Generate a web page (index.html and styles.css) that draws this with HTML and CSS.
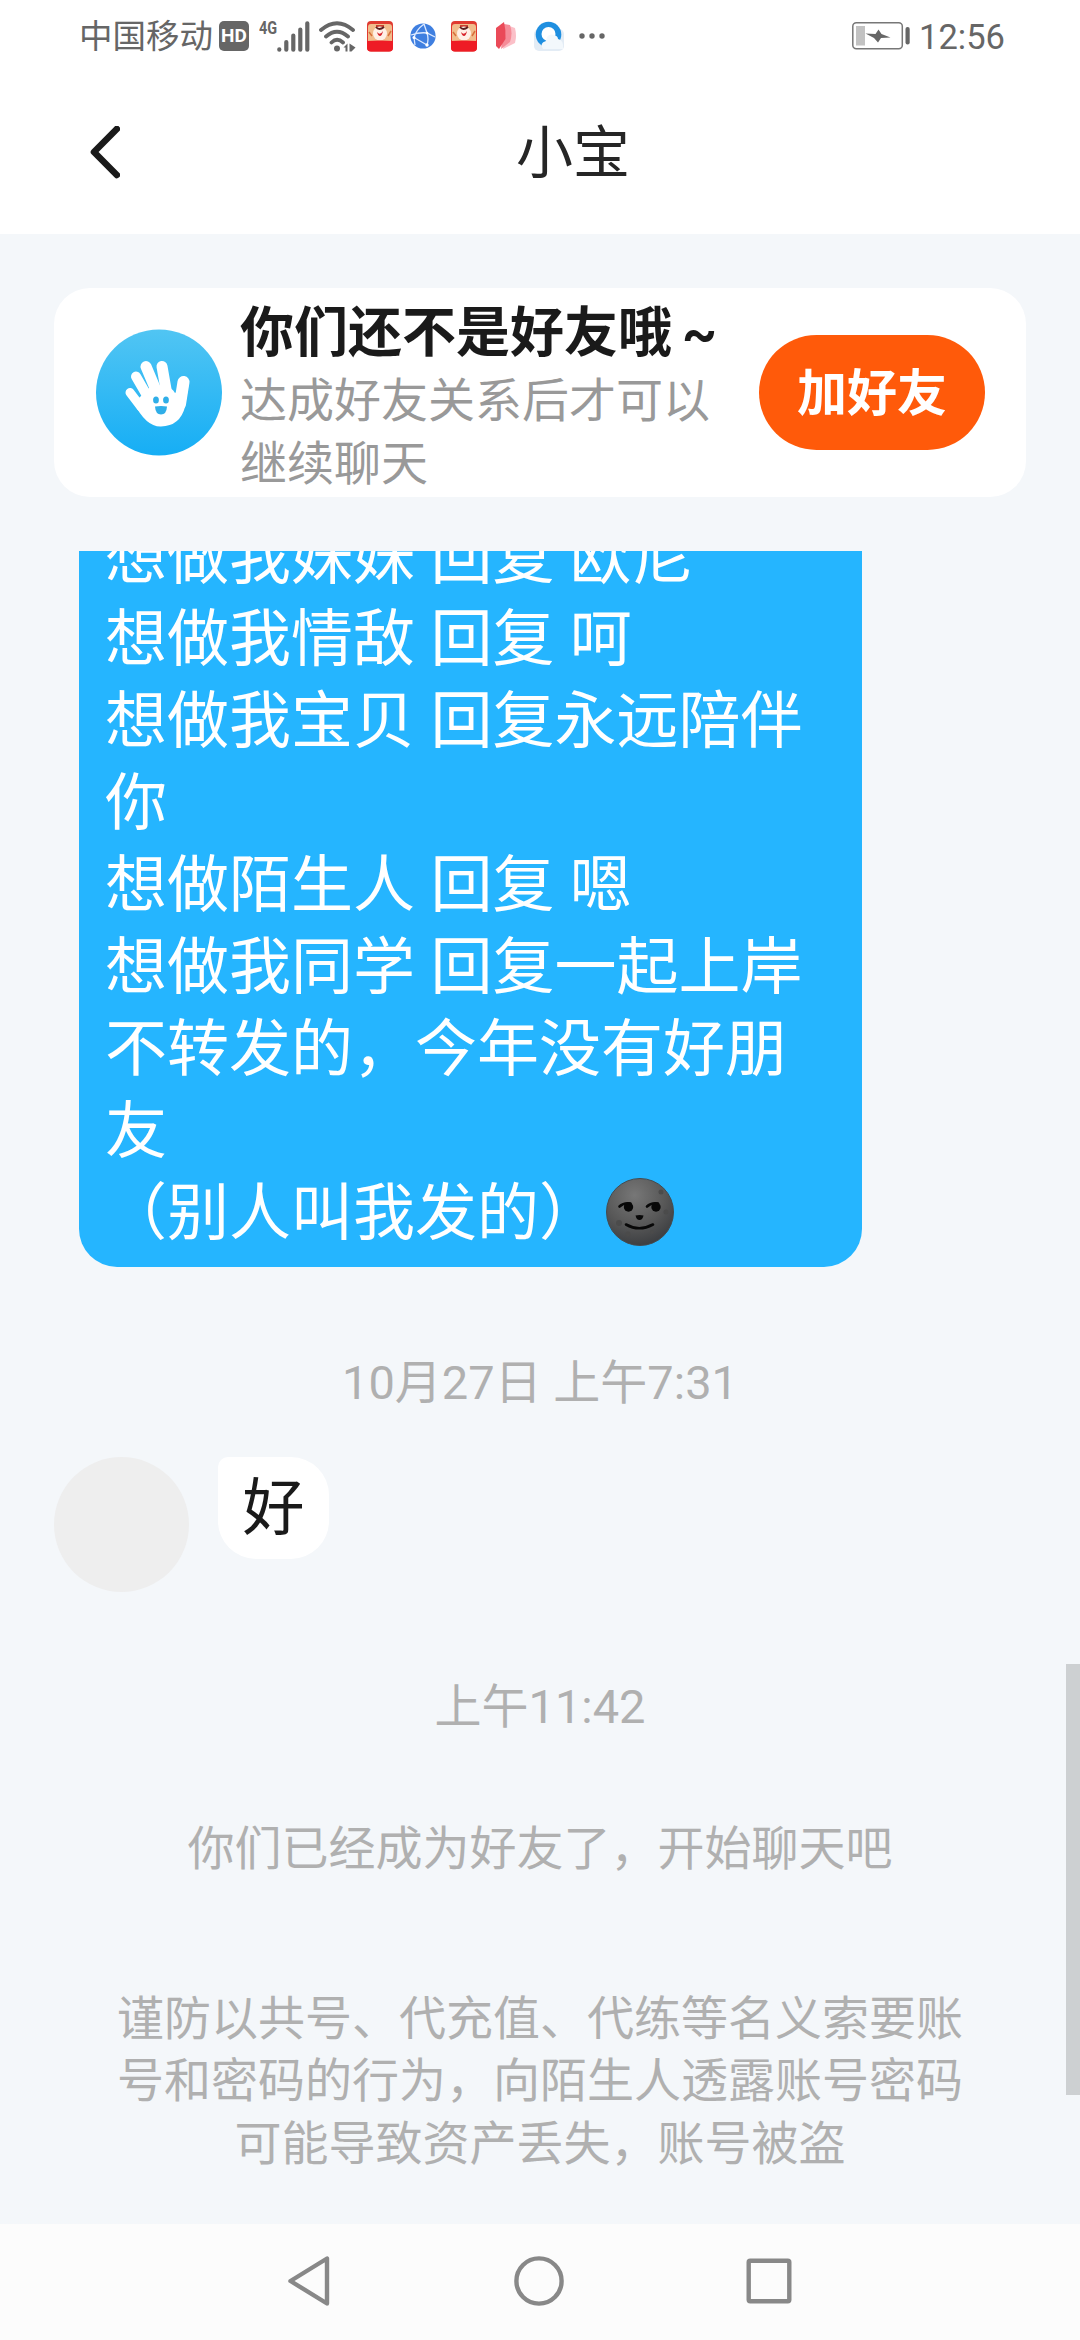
FILE: index.html
```html
<!DOCTYPE html>
<html lang="zh-CN">
<head>
<meta charset="utf-8">
<title>小宝</title>
<link rel="stylesheet" href="styles.css">
</head>
<body>
<div class="phone">
  <div class="status">
    <span class="carrier">中国移动</span>
    <span class="hd">HD</span>
    <span class="net">4G</span>
    <svg class="signal" width="33" height="31" viewBox="0 0 33 31" stroke="#666" stroke-width="4.2" stroke-linecap="round"><path d="M2.3 28.3v.4M9.3 21v7.7M16.3 14.500v14.200M23.300 8.500v20.200M30.300 2.300v26.400"/></svg>
    <svg class="wifi" width="37" height="31" viewBox="0 0 37 31" fill="none" stroke="#666" stroke-width="3.8" stroke-linecap="round"><path d="M2 9Q18 -4.500 34 9M7 15.500Q18 5.800 29 15.500M12.500 21.500Q18 16 24 21.500"/><circle cx="18" cy="27.500" r="3" fill="#666" stroke="none"/><path d="M24.500 26.500l4-4v8h-2v-4zM30.500 22.500l6 4-4 4h-2z" fill="#666" stroke="none"/></svg>
    <svg class="app-a" width="26" height="31" viewBox="0 0 26 31"><use href="#red-app"/></svg>
    <svg class="globe" width="26" height="27" viewBox="0 0 26 27"><circle cx="13" cy="13" r="12.600" fill="#3f7fe0"/><path d="M14 1Q6 7 4 14.500L17 22M1 12Q10 9 17 10L25 14M14 1L17 10Q19 16 17 22M4 14.500L5 22" fill="none" stroke="#dce9ff" stroke-width="1.300"/><circle cx="4" cy="14.500" r="1.500" fill="#fff"/><circle cx="17" cy="22" r="1.700" fill="#fff"/><circle cx="17" cy="10" r="1.300" fill="#fff"/></svg>
    <svg class="app-b" width="26" height="31" viewBox="0 0 26 31"><use href="#red-app"/></svg>
    <svg class="leaf" width="21" height="28" viewBox="0 0 21 28"><path d="M11 3l8 3q2 8 0 15l-12 6z" fill="#fbc0c8"/><path d="M8 2l6 1q3 8 0 17l-9 7z" fill="#f58c98"/><path d="M0 6L8 0q2 8 1.500 17L3 27 0 24z" fill="#ea4a58"/></svg>
    <svg class="browser" width="30" height="31" viewBox="0 0 30 31"><rect x="0" y="8" width="30" height="22" rx="5" fill="#e3ecf5"/><circle cx="14.500" cy="13.500" r="12.800" fill="#1f8fe0"/><circle cx="14.500" cy="13" r="7" fill="#fff"/><path d="M9 28q-4-6 3-8 1-8 8-6 4 1 4 4 6 1 5 10z" fill="#f3f8fc"/></svg>
    <svg class="dots" width="26" height="6" viewBox="0 0 26 6" fill="#666"><circle cx="3" cy="3" r="2.700"/><circle cx="13" cy="3" r="2.700"/><circle cx="23" cy="3" r="2.700"/></svg>
    <svg class="battery" width="59" height="28" viewBox="0 0 59 28"><rect x=".8" y=".8" width="49.500" height="26" rx="3.500" fill="none" stroke="#777" stroke-width="1.500"/><rect x="4" y="4" width="9" height="19.500" fill="#c2c2c2"/><path d="M13.500 11.500L23.500 12 26.500 7.500 29.500 12 38.500 15.500 29 16 26 20.500 22 16z" fill="#666"/><rect x="53.500" y="5" width="4.200" height="17.500" rx="2" fill="#666"/></svg>
    <span class="clock">12:56</span>
  </div>

  <header class="titlebar">
    <svg width="30" height="54" viewBox="0 0 30 54" fill="none" stroke="#1a1a1a" stroke-width="6.600" stroke-linecap="round" stroke-linejoin="round"><path d="M26.800 3L4 26l22.800 23"/></svg>
    <h1 class="title">小宝</h1>
  </header>

  <main class="chat">
    <section class="card">
      <svg class="hand" width="126" height="127" viewBox="0 0 126 127">
        <defs><linearGradient id="sky" x1="0" y1="0" x2="0" y2="1"><stop offset="0" stop-color="#51c5f3"/><stop offset="1" stop-color="#16aef5"/></linearGradient></defs>
        <circle cx="63" cy="63.500" r="63" fill="url(#sky)"/>
        <g fill="none" stroke="#fff" stroke-linecap="round"><path d="M34 63.500L45 78" stroke-width="9"/><path d="M40 47.500L53 70" stroke-width="10"/><path d="M50 37.500L62 66" stroke-width="11"/><path d="M66 37.500L71 66" stroke-width="11"/><path d="M87.500 53L84 75" stroke-width="12"/></g>
        <path d="M38 74L54 58q8-3 15 0 7 0 10 6l13.500-8-3.500 22q-5 19-24 19.500Q50 98 38 74z" fill="#fff"/>
        <ellipse cx="60" cy="71" rx="2.900" ry="3.600" fill="#2faee8"/><ellipse cx="70" cy="71" rx="2.900" ry="3.600" fill="#2faee8"/><path d="M59 77.500q6-1 12 0-.5 8-6 8t-6-8z" fill="#2faee8"/>
      </svg>
      <div class="card-text">
        <h2 class="card-title">你们还不是好友哦<span class="tilde">~</span></h2>
        <p class="card-sub">达成好友关系后才可以<br>继续聊天</p>
      </div>
      <button class="add">加好友</button>
    </section>

    <div class="thread">
      <div class="bubble sent">想做我妹妹 回复 欧尼<br>想做我情敌 回复 呵<br>想做我宝贝 回复永远陪伴<br>你<br>想做陌生人 回复 嗯<br>想做我同学 回复一起上岸<br>不转发的，今年没有好朋<br>友<br>（别人叫我发的）<svg class="moon" width="68" height="68" viewBox="0 0 68 68"><defs><radialGradient id="dusk" cx=".42" cy=".25" r=".75"><stop offset="0" stop-color="#777"/><stop offset=".6" stop-color="#585858"/><stop offset="1" stop-color="#3d3f42"/></radialGradient></defs><circle cx="34" cy="34" r="33.500" fill="url(#dusk)" stroke="#444b50"/><g fill="#4b4b4b"><circle cx="55" cy="14" r="2.500"/><circle cx="60" cy="34" r="2.500"/><circle cx="13" cy="45" r="3"/><circle cx="22" cy="56" r="2.500"/><circle cx="46" cy="54" r="2"/></g><g fill="#080808"><circle cx="22.500" cy="29" r="4.700"/><circle cx="50" cy="29" r="4.700"/><path d="M29.500 37.500q4-1 8 0-1 4.500-4 4.500t-4-4.500z"/></g><path d="M13.500 28.500q4-4 11-3M41 28.500q4-4 11-3M20 46.500q13 7.500 27 0" fill="none" stroke="#080808" stroke-width="2.600" stroke-linecap="round"/></svg></div>
      <p class="note date">10月27日 上午7:31</p>
      <div class="received-row">
        <div class="avatar"></div>
        <div class="bubble received">好</div>
      </div>
      <p class="note time">上午11:42</p>
      <p class="note friends">你们已经成为好友了，开始聊天吧</p>
      <p class="note warning">谨防以共号、代充值、代练等名义索要账<br>号和密码的行为，向陌生人透露账号密码<br>可能导致资产丢失，账号被盗</p>
    </div>
    <div class="scrollbar"></div>
  </main>

  <nav class="nav">
    <svg width="46" height="52" viewBox="0 0 46 52" fill="none" stroke="#888" stroke-width="4.400" stroke-linejoin="round"><path d="M41 3.500v45L4.500 26z"/></svg>
    <svg width="50" height="50" viewBox="0 0 50 50" fill="none" stroke="#888" stroke-width="4.400"><circle cx="25" cy="25" r="22.600"/></svg>
    <svg width="46" height="46" viewBox="0 0 46 46" fill="none" stroke="#888" stroke-width="4.400"><rect x="2.700" y="2.700" width="40.600" height="40.600" rx="1.500"/></svg>
  </nav>
</div>

<svg class="symbols" width="0" height="0"><symbol id="red-app" viewBox="0 0 26 31"><rect width="26" height="30.500" rx="4" fill="#e03a30"/><path d="M1 6Q1 3 4 3h18q3 0 3 3v14H1z" fill="#f1bd8c"/><path d="M9 4h8v3H9z" fill="#c9402f"/><circle cx="13" cy="12.500" r="7" fill="#fff0e6"/><path d="M9 6q3 4 8 0" stroke="#5a2020" stroke-width="1.800" fill="none"/><path d="M10 11q3 4 6-1-1 5-3 5t-3-4z" fill="#d8242c"/><path d="M2 11l3 4M24 10l-3 5" stroke="#d8703a" stroke-width="1.500"/><path d="M0 20q13-1 26 0v6.500a4 4 0 0 1-4 4H4a4 4 0 0 1-4-4z" fill="#ee1c25"/></symbol></svg>
</body>
</html>
```
FILE: styles.css
```css
* { box-sizing: border-box; margin: 0; padding: 0; }
body {
  background: #fff;
  font-family: Roboto, "Noto Sans CJK SC", sans-serif;
  font-weight: 400;
  -webkit-font-smoothing: antialiased;
}
svg { display: block; flex: none; }
.symbols { display: none; }
.phone { width: 1080px; height: 2340px; display: flex; flex-direction: column; overflow: hidden; }

/* system status bar */
.status { height: 72px; flex: none; display: flex; align-items: center; padding: 0 76px 0 79px; color: #666; }
.carrier { padding-top: 2px; font-size: 33.500px; line-height: 40px; width: 134px; white-space: nowrap; }
.hd {
  width: 30px; height: 30px; margin-left: 6px; border-radius: 5px;
  background: #666; color: #fff; font: 700 19px/30px Roboto, sans-serif; text-align: center;
}
.net { width: 18px; margin: 0 0 17px 10px; font: 700 19px/18px Roboto, sans-serif; transform: scaleX(.76); transform-origin: left; }
.wifi { margin-left: 9px; }
.app-a { margin-left: 11px; }
.globe { margin-left: 17px; }
.app-b { margin-left: 15px; }
.leaf { margin-left: 19px; }
.browser { margin-left: 17px; }
.dots { margin-left: 15px; }
.battery { margin-left: auto; }
.clock { width: 85px; margin-left: 8px; padding-top: 2px; font-size: 34.500px; line-height: 40px; }

.titlebar { height: 162px; flex: none; display: flex; align-items: center; padding: 0 54px 0 90px; }
.title { flex: 1; padding-top: 2px; text-align: center; font-size: 57px; line-height: 80px; font-weight: 400; color: #262626; }

/* conversation */
.chat { position: relative; flex: 1; min-height: 0; display: flex; flex-direction: column; background: #f4f7fa; padding-top: 54px; }
.card {
  height: 209px; flex: none; margin: 0 54px; padding: 0 41px 0 42px;
  display: flex; align-items: center; background: #fff; border-radius: 36px;
}
.card-text { margin-left: 18px; padding-top: 8px; white-space: nowrap; }
.card-title { font-size: 54px; line-height: 72px; color: #1a1a1a; }
.tilde { margin-left: 10px; }
.card-sub { font-size: 47px; line-height: 62.500px; color: #999; }
.add {
  width: 226px; height: 115px; margin-left: auto; padding-top: 3px; border: 0; border-radius: 58px;
  background: #ff5a0a; color: #fff; font: 700 50px/112px Roboto, "Noto Sans CJK SC", sans-serif;
}

.thread { flex: 1; min-height: 0; margin-top: 54px; overflow: hidden; display: flex; flex-direction: column; }
.bubble { font-size: 62px; line-height: 82px; white-space: nowrap; }
.sent {
  width: 783px; height: 750px; flex: none; margin: -34px 0 0 79px; padding: 0 26px;
  background: #25b5ff; color: #fff; border-radius: 0 0 38px 38px;
}
.moon { display: inline-block; vertical-align: -11px; margin-left: 5px; }
.note { text-align: center; font-size: 47px; line-height: 62.500px; color: #b0b0b0; flex: none; }
.date { margin-top: 85px; }
.received-row { display: flex; align-items: flex-start; margin: 42px 0 0 54px; }
.avatar { width: 135px; height: 135px; border-radius: 50%; background: #eee; }
.received { margin-left: 29px; width: 111px; height: 102px; padding-top: 2px; line-height: 100px; text-align: center; background: #fff; color: #1a1a1a; border-radius: 10px 38px 38px 38px; }
.time { margin-top: 84px; }
.friends { margin-top: 80px; }
.warning { margin-top: 107px; }
.scrollbar { position: absolute; right: 0; top: 1430px; width: 14px; height: 431px; background: #cdd0d2; }

.nav { height: 116px; flex: none; display: flex; justify-content: space-between; align-items: center; padding: 0 288px 2px 286px; background: #fcfcfc; }
```
